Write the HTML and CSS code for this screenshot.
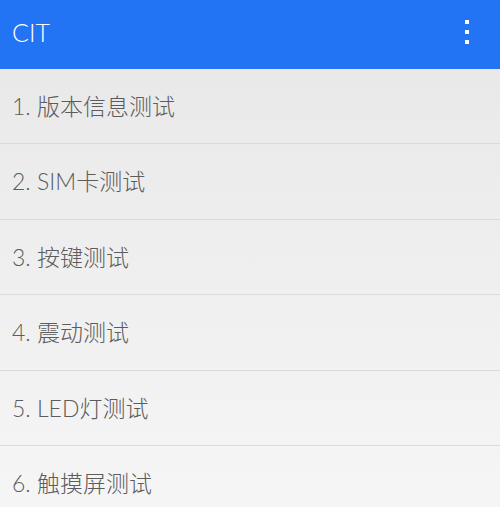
FILE: index.html
```
<!DOCTYPE html>
<html lang="zh">
<head>
    <meta charset="UTF-8">
    <meta name="viewport" content="width=device-width, initial-scale=1.0">
    <title>CIT</title>
    <link rel="stylesheet" href="styles.css">
</head>
<body>

<!-- 顶部标题栏 -->
<header class="top-bar">
    <h1>CIT</h1>
    <button class="menu-btn" type="button" aria-label="更多">
        <svg width="5" height="25" viewBox="0 0 5 25" fill="#fff">
            <rect x="0" y="0" width="4" height="4"/>
            <rect x="0" y="10" width="4" height="4"/>
            <rect x="0" y="20" width="4" height="4"/>
        </svg>
    </button>
</header>

<!-- 测试项列表 -->
<main class="test-list">
    <a href="#version">1. 版本信息测试</a>
    <a href="#sim">2. SIM卡测试</a>
    <a href="#key">3. 按键测试</a>
    <a href="#vibrate">4. 震动测试</a>
    <a href="#led">5. LED灯测试</a>
    <a href="#touch">6. 触摸屏测试</a>
</main>

</body>
</html>
```
FILE: styles.css
```
:root {
    --blue: #2373f5;
    --text: #5c5c5c;
    --line: #dadada;
}

body {
    margin: 0;
    min-height: 100vh;
    background: #f5f5f5;
    font-family: Lato, "Noto Sans CJK SC", sans-serif;
    font-weight: 300;
}

.top-bar {
    display: flex;
    justify-content: space-between;
    align-items: center;
    box-sizing: border-box;
    height: 69px;
    padding: 0 20px 5px 12px;
    background: var(--blue);
    color: #fff;
}

.top-bar h1 {
    margin: 0;
    font-size: 25px;
    font-weight: 300;
}

.menu-btn {
    display: flex;
    padding: 8px 10px;
    border: 0;
    background: none;
    cursor: pointer;
}

.test-list {
    display: grid;
    grid-auto-rows: 75px 76px;
    background: linear-gradient(#e9e9e9, #f6f6f6);
}

.test-list a {
    display: flex;
    align-items: center;
    padding: 0 12px 3px;
    border-bottom: 1px solid var(--line);
    color: var(--text);
    font-size: 23px;
    text-decoration: none;
}
```
